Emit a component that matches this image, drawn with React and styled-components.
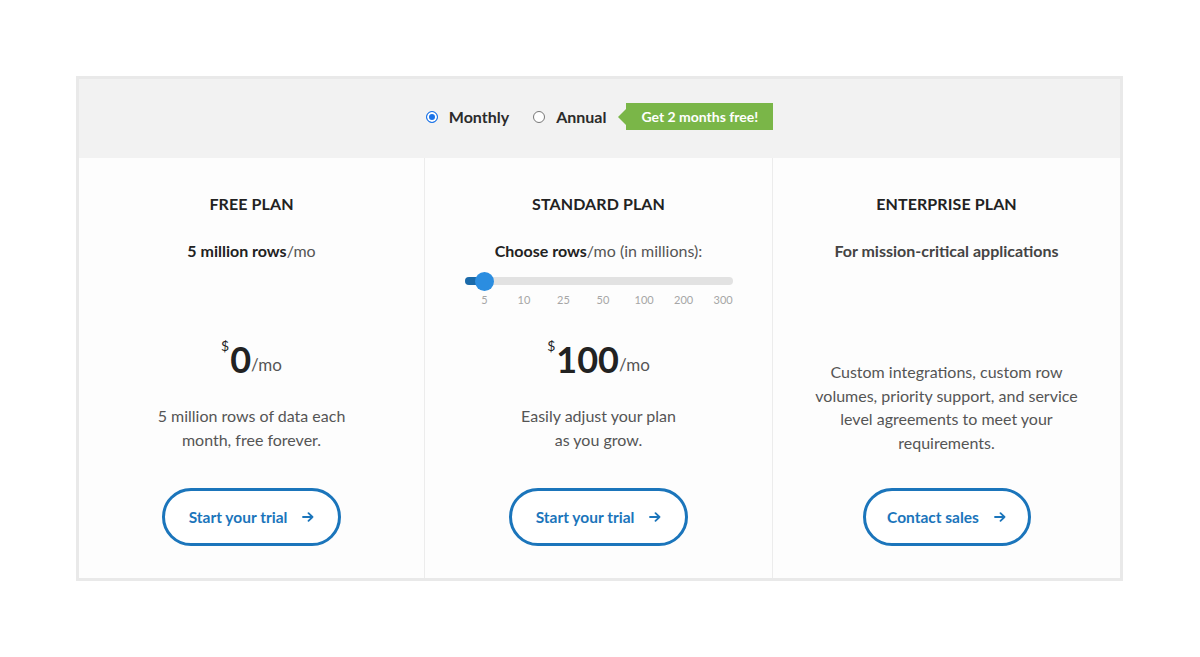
import React, { useState } from "react";
import styled, { createGlobalStyle } from "styled-components";

const GlobalStyle = createGlobalStyle`
	body {
		margin: 0;
		background: #ffffff;
		font-family: Lato, "Noto Sans", sans-serif;
		color: #222;
	}
`;

const blue = "#1b75bb";

const Pricing = styled.div`
	width: 1041px;
	margin: 76px 0 0 76px;
	border: 3px solid #e9e9e9;
	background: #fdfdfd;
`;

const Toggle = styled.div`
	height: 79px;
	box-sizing: border-box;
	padding-bottom: 4px;
	background: #f2f2f2;
	display: flex;
	align-items: center;
	justify-content: center;
`;

const RadioLabel = styled.label`
	display: flex;
	align-items: center;
	gap: 6px;
	margin-right: 24px;
	font-size: 16px;
	font-weight: 700;
	color: #2b2b2b;
	cursor: pointer;
	&:last-of-type { margin-right: 14px; }
`;

const RadioDot = styled.span`
	width: 12px;
	height: 12px;
	box-sizing: border-box;
	border-radius: 50%;
	border: 1px solid ${({ checked }) => (checked ? "#1a73e8" : "#777")};
	background: ${({ checked }) => (checked ? "#1a73e8" : "#fff")};
	box-shadow: ${({ checked }) => (checked ? "inset 0 0 0 2px #fff" : "none")};
	margin-right: 5px;
`;

const Badge = styled.div`
	position: relative;
	height: 27px;
	padding: 0 15px;
	margin-left: 6px;
	background: #7ab648;
	color: #fff;
	font-size: 14px;
	font-weight: 700;
	display: flex;
	align-items: center;
	&:before {
		content: "";
		position: absolute;
		left: -8px;
		top: 50%;
		margin-top: -8px;
		border-style: solid;
		border-width: 8px 8px 8px 0;
		border-color: transparent #7ab648 transparent transparent;
	}
`;

const Columns = styled.div`
	display: grid;
	grid-template-columns: 345px 1fr 1fr;
	height: 420px;
`;

const Column = styled.div`
	display: flex;
	flex-direction: column;
	align-items: center;
	padding: 36px 20px 32px;
	text-align: center;
	border-left: 1px solid #ececec;
	&:first-child { border-left: none; }
`;

const Title = styled.h2`
	margin: 0;
	font-size: 16px;
	line-height: 20px;
	font-weight: 700;
	letter-spacing: 0.1px;
	color: #222;
`;

const Subtitle = styled.div`
	margin-top: 27px;
	font-size: 16px;
	line-height: 20px;
	color: ${({ muted }) => (muted ? "#444" : "#555")};
	font-weight: ${({ muted }) => (muted ? 700 : 400)};
	b { color: #222; }
`;

const Body = styled.div`
	flex: 1;
	display: flex;
	flex-direction: column;
	justify-content: flex-end;
	align-items: center;
	padding-bottom: ${({ low }) => (low ? 34 : 37)}px;
`;

const Price = styled.div`
	display: flex;
	align-items: flex-end;
	height: 44px;
	margin-bottom: 25px;
	color: #222;
`;

const Currency = styled.span`
	font-size: 14px;
	align-self: flex-start;
	margin-top: 2px;
	margin-right: 1px;
`;

const Amount = styled.span`
	font-size: 36px;
	font-weight: 700;
	line-height: 40px;
`;

const Per = styled.span`
	font-size: 17px;
	color: #555;
	margin-bottom: 4px;
`;

const Description = styled.p`
	margin: 0;
	font-size: 16px;
	line-height: 23.5px;
	color: #555;
	width: ${({ width }) => width}px;
`;

const Slider = styled.div`
	width: 268px;
	margin-top: 14px;
	margin-bottom: 28px;
`;

const Track = styled.div`
	position: relative;
	height: 8px;
	border-radius: 4px;
	background: #e2e2e2;
`;

const Fill = styled.div`
	height: 100%;
	border-radius: 4px;
	background: #1a6aaa;
`;

const Thumb = styled.div`
	position: absolute;
	top: 50%;
	width: 19px;
	height: 19px;
	margin: -9.5px 0 0 -9.5px;
	border-radius: 50%;
	background: #2b8de0;
`;

const Ticks = styled.div`
	display: flex;
	justify-content: space-between;
	padding: 0 11px 0 20px;
	margin-top: 8px;
	font-size: 11px;
	line-height: 14px;
	color: #a6a6a6;
`;

const Tick = styled.span`
	width: 16px;
	text-align: center;
	margin-left: -8px;
	margin-right: -8px;
`;

const Button = styled.a`
	box-sizing: border-box;
	height: 58px;
	width: ${({ width }) => width}px;
	border: 3px solid ${blue};
	border-radius: 29px;
	display: flex;
	align-items: center;
	justify-content: center;
	gap: 15px;
	color: ${blue};
	font-size: 15.5px;
	font-weight: 700;
	text-decoration: none;
	background: #fff;
	cursor: pointer;
`;

const Arrow = () => (
	<svg width="12" height="10" viewBox="0 0 12 10" fill="none" stroke={blue} strokeWidth="1.8" strokeLinecap="round" strokeLinejoin="round">
		<path d="M1 5h9.5M6.5 1.2 10.5 5l-4 3.8" />
	</svg>
);

const ticks = [5, 10, 25, 50, 100, 200, 300];

export default function App() {
	const [period, setPeriod] = useState("monthly");

	return (
		<>
			<GlobalStyle />
			<Pricing>
				<Toggle>
					<RadioLabel onClick={() => setPeriod("monthly")}>
						<RadioDot checked={period === "monthly"} />
						Monthly
					</RadioLabel>
					<RadioLabel onClick={() => setPeriod("annual")}>
						<RadioDot checked={period === "annual"} />
						Annual
					</RadioLabel>
					<Badge>Get 2 months free!</Badge>
				</Toggle>
				<Columns>
					<Column>
						<Title>FREE PLAN</Title>
						<Subtitle><b>5 million rows</b>/mo</Subtitle>
						<Body>
							<Price>
								<Currency>$</Currency>
								<Amount>0</Amount>
								<Per>/mo</Per>
							</Price>
							<Description width={215}>5 million rows of data each month, free forever.</Description>
						</Body>
						<Button width={179}>Start your trial <Arrow /></Button>
					</Column>
					<Column>
						<Title>STANDARD PLAN</Title>
						<Subtitle><b>Choose rows</b>/mo (in millions):</Subtitle>
						<Body>
							<Slider>
								<Track>
									<Fill style={{ width: "20px" }} />
									<Thumb style={{ left: "20px" }} />
								</Track>
								<Ticks>
									{ticks.map((t) => <Tick key={t}>{t}</Tick>)}
								</Ticks>
							</Slider>
							<Price>
								<Currency>$</Currency>
								<Amount>100</Amount>
								<Per>/mo</Per>
							</Price>
							<Description width={165}>Easily adjust your plan as you grow.</Description>
						</Body>
						<Button width={179}>Start your trial <Arrow /></Button>
					</Column>
					<Column>
						<Title>ENTERPRISE PLAN</Title>
						<Subtitle muted>For mission-critical applications</Subtitle>
						<Body low>
							<Description width={275}>Custom integrations, custom row volumes, priority support, and service level agreements to meet your requirements.</Description>
						</Body>
						<Button width={168}>Contact sales <Arrow /></Button>
					</Column>
				</Columns>
			</Pricing>
		</>
	);
}
